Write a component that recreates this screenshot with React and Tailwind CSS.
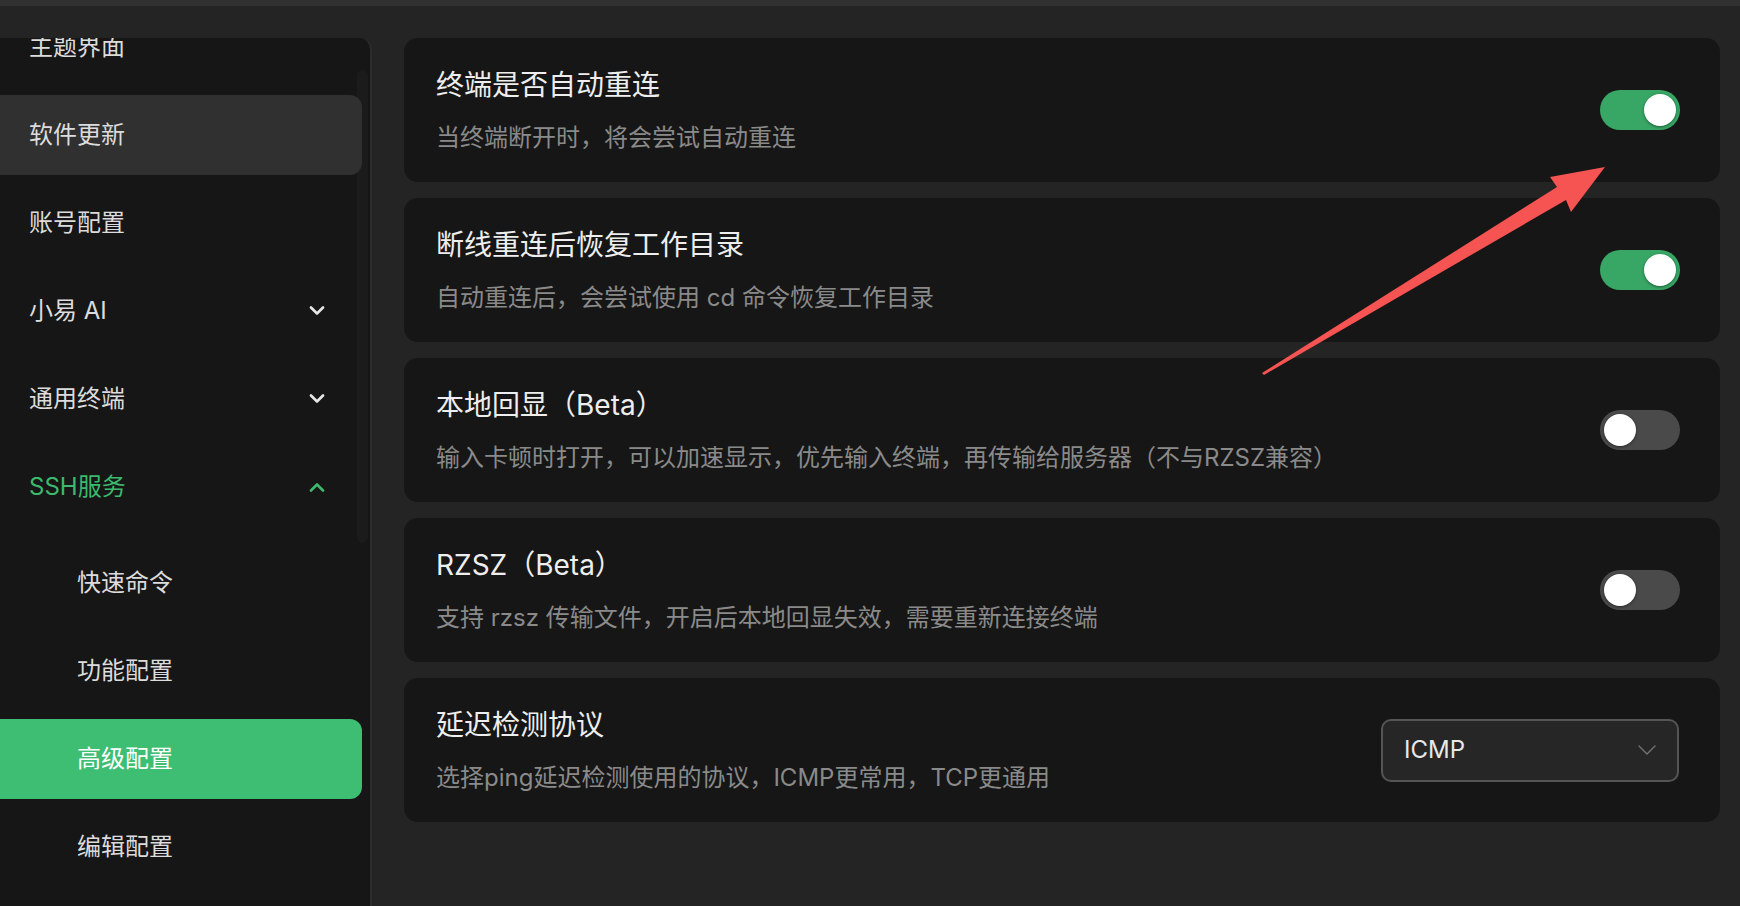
import React from "react";

function Chevron({ up = false, className = "" }) {
  return (
    <svg width="16" height="10" viewBox="0 0 16 10" className={className} fill="none">
      <path
        d={up ? "M2 8.5 L8 2.5 L14 8.5" : "M2 1.5 L8 7.5 L14 1.5"}
        stroke="currentColor"
        strokeWidth="2.6"
        strokeLinecap="round"
        strokeLinejoin="round"
      />
    </svg>
  );
}

function Toggle({ on }) {
  return (
    <div
      className={
        on
          ? "w-[80px] h-[40px] rounded-full bg-[#38a665] flex items-center justify-end px-[4px] shrink-0"
          : "w-[80px] h-[40px] rounded-full bg-[#4a4a4a] flex items-center justify-start px-[4px] shrink-0"
      }
    >
      <div className="w-[32px] h-[32px] rounded-full bg-white shadow-[0_1px_3px_rgba(0,0,0,0.45)]" />
    </div>
  );
}

function Card({ title, desc, children }) {
  return (
    <div className="h-[144px] rounded-[14px] bg-[#161616] pl-[32px] pr-[40px] flex items-center justify-between">
      <div className="flex flex-col gap-[19px]">
        <div className="text-[28px] leading-[36px] text-[#eeeeee]">{title}</div>
        <div className="text-[24px] leading-[32px] text-[#8a8a8a]">{desc}</div>
      </div>
      {children}
    </div>
  );
}

function NavItem({ label, sub = false, active = false, hover = false, chevron = null, green = false }) {
  let bg = "";
  if (active) bg = "bg-[#3dbe72] rounded-r-[12px]";
  else if (hover) bg = "bg-[#303030] rounded-r-[12px]";
  return (
    <div
      className={
        "h-[80px] mr-[8px] flex items-center justify-between shrink-0 " +
        bg +
        (sub ? " pl-[77px]" : " pl-[29px]") +
        " pr-[37px]"
      }
    >
      <span
        className={
          "text-[24px] leading-[32px] " +
          (green ? "text-[#3cb96d]" : active ? "text-white" : "text-[#dcdcdc]")
        }
      >
        {label}
      </span>
      {chevron === "down" && <Chevron className="text-[#e6e6e6]" />}
      {chevron === "up" && <Chevron up className="text-[#3cb96d]" />}
    </div>
  );
}

export default function App() {
  return (
    <div className="relative w-[1740px] h-[906px] overflow-hidden bg-[#242424] font-['Inter','Noto_Sans_CJK_SC',sans-serif] flex flex-col">
      <div className="h-[6px] bg-[#313131] shrink-0" />
      <div className="flex flex-1 pt-[32px] min-h-0">
        {/* Sidebar */}
        <div className="relative w-[372px] shrink-0 bg-[#161616] rounded-tr-[12px] border-r-2 border-[#2c2c2c] overflow-hidden">
          <div className="absolute right-[2px] top-[32px] w-[11px] h-[473px] rounded-full bg-[#1b1b1b]" />
          <div className="relative flex flex-col gap-[8px] mt-[-31px]">
            <NavItem label="主题界面" />
            <NavItem label="软件更新" hover />
            <NavItem label="账号配置" />
            <NavItem label="小易 AI" chevron="down" />
            <NavItem label="通用终端" chevron="down" />
            <NavItem label="SSH服务" chevron="up" green />
            <div className="flex flex-col gap-[8px] mt-[8px]">
              <NavItem label="快速命令" sub />
              <NavItem label="功能配置" sub />
              <NavItem label="高级配置" sub active />
              <NavItem label="编辑配置" sub />
            </div>
          </div>
        </div>

        {/* Main */}
        <div className="flex-1 pl-[32px] pr-[20px] flex flex-col gap-[16px]">
          <Card title="终端是否自动重连" desc="当终端断开时，将会尝试自动重连">
            <Toggle on />
          </Card>
          <Card title="断线重连后恢复工作目录" desc="自动重连后，会尝试使用 cd 命令恢复工作目录">
            <Toggle on />
          </Card>
          <Card
            title="本地回显（Beta）"
            desc="输入卡顿时打开，可以加速显示，优先输入终端，再传输给服务器（不与RZSZ兼容）"
          >
            <Toggle on={false} />
          </Card>
          <Card title="RZSZ（Beta）" desc="支持 rzsz 传输文件，开启后本地回显失效，需要重新连接终端">
            <Toggle on={false} />
          </Card>
          <Card title="延迟检测协议" desc="选择ping延迟检测使用的协议，ICMP更常用，TCP更通用">
            <div className="w-[298px] h-[63px] rounded-[10px] border-2 border-[#555555] bg-[#262626] flex items-center justify-between pl-[21px] pr-[21px] shrink-0 mr-[1px]">
              <span className="text-[24px] leading-[32px] text-[#e8e8e8]">ICMP</span>
              <svg width="18" height="10" viewBox="0 0 18 10" fill="none">
                <path d="M1 1 L9 9 L17 1" stroke="#727272" strokeWidth="1.4" strokeLinecap="round" strokeLinejoin="round" />
              </svg>
            </div>
          </Card>
        </div>
      </div>

      {/* Annotation arrow */}
      <svg
        className="absolute left-0 top-0 pointer-events-none"
        width="1740"
        height="906"
        viewBox="0 0 1740 906"
      >
        <polygon
          points="1605,167 1550,177 1557,187 1262,373 1264,375 1566,200 1571,212"
          fill="#f65353"
        />
      </svg>
    </div>
  );
}
